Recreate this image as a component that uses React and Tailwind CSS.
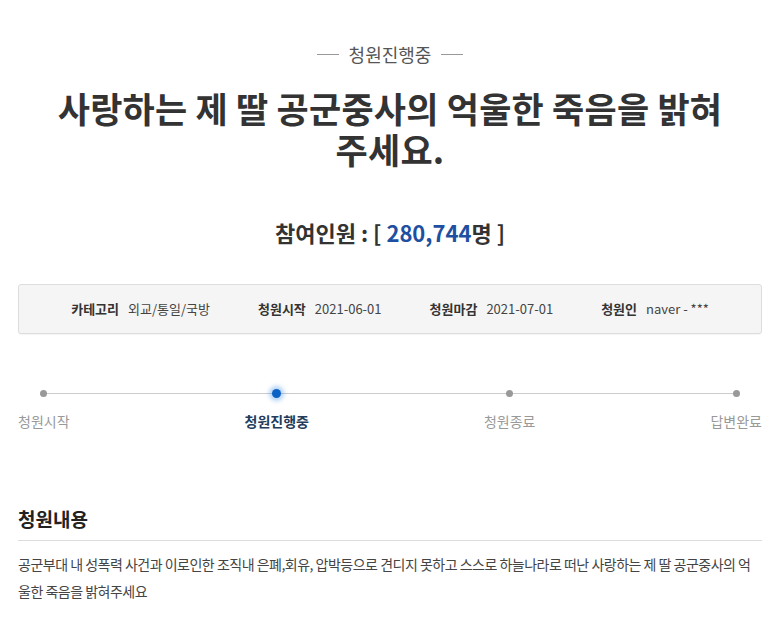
export default function App() {
  const steps = [
    { label: "청원시작", active: false },
    { label: "청원진행중", active: true },
    { label: "청원종료", active: false },
    { label: "답변완료", active: false },
  ];
  const info = [
    ["카테고리", "외교/통일/국방"],
    ["청원시작", "2021-06-01"],
    ["청원마감", "2021-07-01"],
    ["청원인", "naver - ***"],
  ];
  return (
    <div
      className="w-full min-h-[637px] bg-white px-[18px] pt-[42px] pb-10 text-[#333]"
      style={{ fontFamily: '"Noto Sans CJK KR", "Noto Sans", sans-serif' }}
    >
      <div className="flex items-center justify-center gap-[10px] text-[18px] leading-[24px] text-[#555]">
        <span className="h-px w-[22px] bg-[#999]" />
        <span>청원진행중</span>
        <span className="h-px w-[22px] bg-[#999]" />
      </div>

      <h1 className="mt-[21px] text-center text-[35px] font-bold leading-[41px] tracking-[0.2px] text-[#333]">
        사랑하는 제 딸 공군중사의 억울한 죽음을 밝혀
        <br />
        주세요.
      </h1>

      <div className="mt-[48px] text-center text-[22px] font-bold leading-[30px] text-[#333]">
        참여인원 : [ <span className="text-[#1e4fa0]">280,744</span>명 ]
      </div>

      <div className="mt-[37px] flex h-[50px] items-center justify-center gap-[48px] rounded-[3px] border border-[#ddd] bg-[#f5f5f5] text-[13px] shadow-[0_1px_1px_rgba(0,0,0,0.04)]">
        {info.map(([k, v]) => (
          <div key={k} className="flex items-center gap-[9px]">
            <span className="font-bold text-[#333]">{k}</span>
            <span className="text-[#444]">{v}</span>
          </div>
        ))}
      </div>

      <div className="relative mt-[53px]">
        <div className="absolute left-[24px] right-[25px] top-[6px] h-px bg-[#ccc]" />
        <div className="relative flex justify-between">
          {steps.map((s) => (
            <div key={s.label} className="flex flex-col items-center">
              <div className="flex h-[12px] items-center justify-center">
                {s.active ? (
                  <span className="h-[9px] w-[9px] rounded-full bg-[#0b62c4] shadow-[0_0_4px_3px_rgba(40,130,230,0.35)]" />
                ) : (
                  <span className="h-[7px] w-[7px] rounded-full bg-[#999]" />
                )}
              </div>
              <span
                className={
                  "mt-[13px] text-[14px] leading-[18px] " +
                  (s.active ? "font-bold text-[#243b5a]" : "text-[#999]")
                }
              >
                {s.label}
              </span>
            </div>
          ))}
        </div>
      </div>

      <h2 className="mt-[76px] border-b border-[#ddd] pb-[8px] text-[19px] font-bold leading-[26px] text-[#222]">
        청원내용
      </h2>
      <p className="mt-[10px] text-[14px] leading-[27px] tracking-[-0.5px] text-[#444]">
        공군부대 내 성폭력 사건과 이로인한 조직내 은폐,회유, 압박등으로 견디지 못하고 스스로 하늘나라로 떠난 사랑하는 제 딸 공군중사의 억울한 죽음을 밝혀주세요
      </p>
    </div>
  );
}
